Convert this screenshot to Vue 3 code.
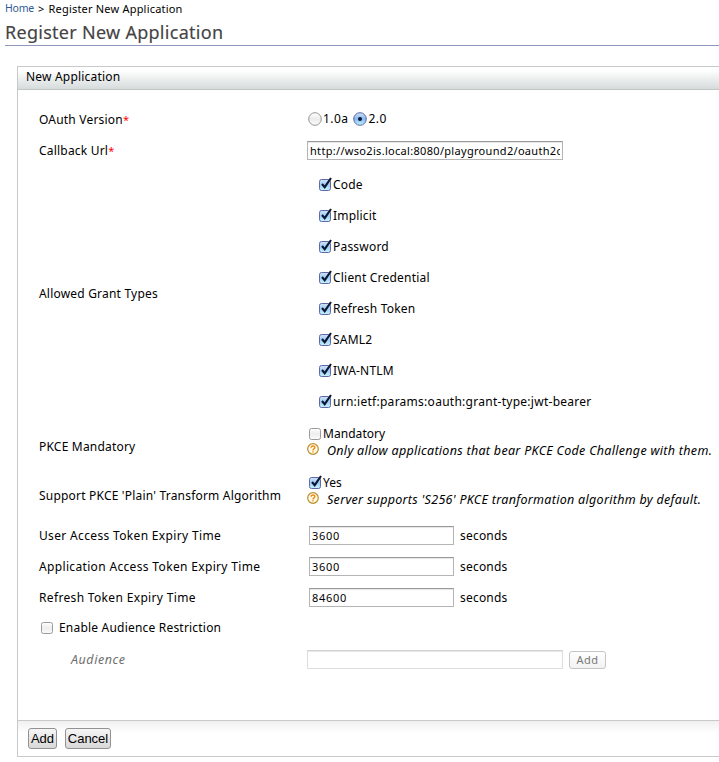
<script setup>
import { ref, h } from 'vue'

const Tick = (props) =>
  h('svg', { class: 'tick', viewBox: '0 0 14 14', width: 14, height: 14 }, [
    h('defs', [
      h('linearGradient', { id: 'boxOn', x1: 0, y1: 0, x2: 0, y2: 1 }, [
        h('stop', { offset: '0', 'stop-color': '#d0e2f8' }),
        h('stop', { offset: '.5', 'stop-color': '#9fccf5' }),
        h('stop', { offset: '1', 'stop-color': '#c8f4ff' })
      ]),
      h('linearGradient', { id: 'boxOff', x1: 0, y1: 0, x2: 0, y2: 1 }, [
        h('stop', { offset: '0', 'stop-color': '#ffffff' }),
        h('stop', { offset: '.5', 'stop-color': '#ededed' }),
        h('stop', { offset: '1', 'stop-color': '#fbfbfb' })
      ])
    ]),
    h('rect', {
      x: 1.5, y: 2.5, width: 11, height: 11, rx: 2,
      fill: props.on ? 'url(#boxOn)' : 'url(#boxOff)',
      stroke: props.on ? '#5f68a8' : '#9a9a9a'
    }),
    props.on ? h('path', { d: 'M4 7 L6.7 10.2 L13 1', fill: 'none', stroke: '#0b1733', 'stroke-width': 2.1 }) : null
  ])
Tick.props = ['on']

const Radio = (props) =>
  h('svg', { viewBox: '0 0 14 14', width: 14, height: 14 }, [
    h('defs', [
      h('linearGradient', { id: 'dotOn', x1: 0, y1: 0, x2: 0, y2: 1 }, [
        h('stop', { offset: '0', 'stop-color': '#d3e4f8' }),
        h('stop', { offset: '.5', 'stop-color': '#84b8ee' }),
        h('stop', { offset: '1', 'stop-color': '#c6f4ff' })
      ]),
      h('linearGradient', { id: 'dotOff', x1: 0, y1: 0, x2: 0, y2: 1 }, [
        h('stop', { offset: '0', 'stop-color': '#ffffff' }),
        h('stop', { offset: '.5', 'stop-color': '#ebebeb' }),
        h('stop', { offset: '1', 'stop-color': '#fdfdfd' })
      ])
    ]),
    h('circle', {
      cx: 7, cy: 7, r: 6.3,
      fill: props.on ? 'url(#dotOn)' : 'url(#dotOff)',
      stroke: props.on ? '#5969a5' : '#959595'
    }),
    props.on ? h('circle', { cx: 7, cy: 7, r: 2, fill: '#0b1733' }) : null
  ])
Radio.props = ['on']

const Help = () =>
  h('svg', { viewBox: '0 0 12 12', width: 12, height: 12 }, [
    h('circle', { cx: 6, cy: 6, r: 5.3, fill: '#fffbe6', stroke: '#b8902c', 'stroke-width': 1.2 }),
    h('path', { d: 'M4.1 4.8 C4.1 2.5 7.9 2.5 7.9 4.6 C7.9 6 6 5.9 6 7.4', fill: 'none', stroke: '#ef8a1c', 'stroke-width': 1.4 }),
    h('rect', { x: 5.3, y: 8.2, width: 1.4, height: 1.3, fill: '#ef8a1c' })
  ])

const callback = ref('http://wso2is.local:8080/playground2/oauth2client')
const grants = ['Code', 'Implicit', 'Password', 'Client Credential', 'Refresh Token', 'SAML2', 'IWA-NTLM', 'urn:ietf:params:oauth:grant-type:jwt-bearer']
const expiries = ref([
  { label: 'User Access Token Expiry Time', value: '3600' },
  { label: 'Application Access Token Expiry Time', value: '3600' },
  { label: 'Refresh Token Expiry Time', value: '84600' }
])
</script>

<template>
  <div class="page">
    <nav class="crumbs"><a class="home">Home</a><span class="sep">&gt;</span><span>Register New Application</span></nav>
    <h1>Register New Application</h1>
    <section class="panel">
      <header class="head">New Application</header>
      <div class="body">
        <div class="row">
          <div class="label">OAuth Version<i class="req">*</i></div>
          <div class="field radios">
            <Radio :on="false" /><span class="ver">1.0a</span>
            <Radio :on="true" /><span class="ver">2.0</span>
          </div>
        </div>
        <div class="row">
          <div class="label">Callback Url<i class="req">*</i></div>
          <div class="field"><input v-model="callback" class="wide" /></div>
        </div>
        <div class="row grants">
          <div class="label">Allowed Grant Types</div>
          <div class="list">
            <div v-for="g in grants" :key="g" class="grant"><Tick :on="true" /><span>{{ g }}</span></div>
          </div>
        </div>
        <div class="row pkce">
          <div class="label">PKCE Mandatory</div>
          <div class="stack">
            <div class="opt"><Tick :on="false" /><span>Mandatory</span></div>
            <div class="hint"><Help /><span class="note">Only allow applications that bear PKCE Code Challenge with them.</span></div>
          </div>
        </div>
        <div class="row pkce">
          <div class="label">Support PKCE 'Plain' Transform Algorithm</div>
          <div class="stack">
            <div class="opt"><Tick :on="true" /><span>Yes</span></div>
            <div class="hint"><Help /><span class="note">Server supports 'S256' PKCE tranformation algorithm by default.</span></div>
          </div>
        </div>
        <div v-for="e in expiries" :key="e.label" class="row">
          <div class="label expiry">{{ e.label }}</div>
          <div class="field timed"><input v-model="e.value" class="short" /><span>seconds</span></div>
        </div>
        <div class="enable"><Tick :on="false" /><span>Enable Audience Restriction</span></div>
        <div class="row audience">
          <div class="label dim">Audience</div>
          <div class="field"><input class="wide off" disabled /><button class="addoff" disabled>Add</button></div>
        </div>
      </div>
      <footer class="foot"><button>Add</button><button>Cancel</button></footer>
    </section>
  </div>
</template>

<style>
body { margin: 0; background: #fff; overflow: hidden; }
</style>

<style scoped>
.page { height: 762px; overflow: hidden; box-sizing: border-box; font: 12px/16px "Noto Sans", "Open Sans", sans-serif; color: #000; letter-spacing: .2px; white-space: nowrap; }
svg { flex: none; display: block; overflow: visible; }
.crumbs { display: flex; height: 18px; line-height: 18px; padding-left: 5px; font-size: 11px; letter-spacing: .2px; }
.home { color: #2f5c96; margin-top: -1px; font-size: 10.5px; letter-spacing: -.2px; width: 29px; }
.sep { margin: 0 4px 0 4px; }
h1 { margin: 0 0 0 5px; height: 27px; line-height: 28px; border-bottom: 1px solid #8f97bd; font-size: 18px; font-weight: 400; color: #444; letter-spacing: .28px; -webkit-text-stroke: .15px #444; }
.panel { margin: 20px 0 0 17px; border: 1px solid #c8c9c9; border-right: 0; height: 689px; display: flex; flex-direction: column; }
.head { height: 22px; line-height: 20px; padding-left: 8px; border-bottom: 1px solid #c3c6c6; background: linear-gradient(#fff 15%, #d6dbdb); }
.body { flex: 1; padding: 14px 0 0 21px; }
.row { display: grid; grid-template-columns: 268px 1fr; align-items: center; height: 31px; }
.req { color: #f00; font-style: normal; font-size: 11px; }
.field { display: flex; align-items: center; }
.radios { padding-left: 1px; }
.radios svg { margin-top: -1px; }
.ver { margin: -1px 5px 0 1px; letter-spacing: .45px; }
.grants { height: 256px; }
.list { padding: 0 0 2px 11px; }
.grant { height: 31px; display: flex; align-items: center; gap: 1px; }
.grant svg { margin-top: -1px; }
.grant:last-child { letter-spacing: .27px; }
.pkce { height: 49px; }
.stack { display: flex; flex-direction: column; padding-bottom: 9px; }
.opt { display: flex; align-items: center; height: 17px; padding-left: 1px; gap: 1px; letter-spacing: .05px; }
.opt svg { margin-top: -1px; }
.hint { display: flex; align-items: center; height: 17px; gap: 8px; }
.hint svg { margin-top: -3px; }
.note { font-style: italic; font-size: 12.5px; letter-spacing: .3px; }
.expiry { letter-spacing: .34px; }
.timed { padding-left: 2px; gap: 6px; }
input { box-sizing: border-box; height: 19px; margin: 0; padding: 0 2px 1px; border: 1px solid #b5b5b5; border-top-color: #999; background: #fff; box-shadow: inset 0 1px 1px #e6e6e6; font: 11px "Noto Sans", sans-serif; color: #000; letter-spacing: .7px; outline: 0; border-radius: 0; }
.wide { width: 256px; letter-spacing: .31px; }
.short { width: 145px; }
.off { border-color: #dedede; border-top-color: #d2d2d2; }
.enable { height: 30px; display: flex; align-items: center; gap: 5px; padding-left: 1px; }
.enable svg { margin-top: -2px; }
.audience { height: 33px; }
.dim { font-style: italic; font-size: 12.5px; color: #707070; padding-left: 32px; letter-spacing: .55px; }
button { box-sizing: border-box; margin: 0; padding: 0; height: 21px; border: 1px solid #929292; border-radius: 3px; background: linear-gradient(#f6f6f6, #d8d8d8); font: 13px "Liberation Sans", sans-serif; color: #000; width: 29px; }
.addoff { width: 37px; height: 18px; margin-left: 6px; border-color: #c5c5c5; background: linear-gradient(#fff, #f2f2f2); font: 11px "Noto Sans", sans-serif; color: #777; letter-spacing: .4px; }
.foot { height: 35px; display: flex; align-items: center; gap: 8px; padding-left: 10px; border-top: 1px solid #c8c9c9; background: linear-gradient(#f0f0f0, #fff 12px); }
.foot button:last-child { width: 46px; }
</style>
